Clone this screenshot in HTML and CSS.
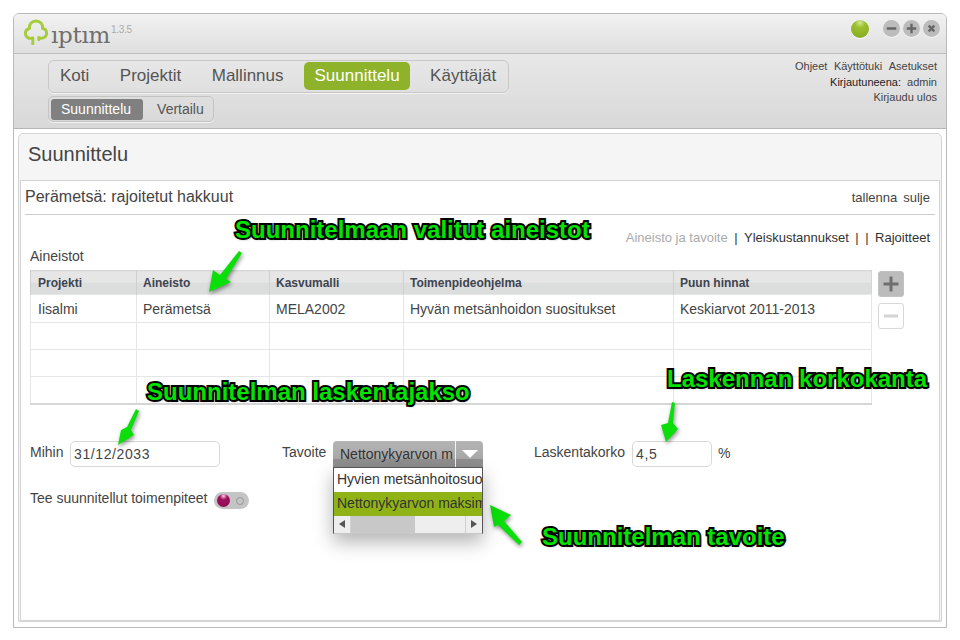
FILE: index.html
```html
<!DOCTYPE html>
<html lang="fi">
<head>
<meta charset="utf-8">
<title>Iptim</title>
<link rel="stylesheet" href="styles.css">
</head>
<body>
<div class="window">
  <header class="titlebar">
    <div class="logo">
      <svg class="clover" width="24" height="26" viewBox="0 0 26 28"><path d="M9.500 27v-6.500M16 22.500v-2.500c5 2 8.500-1 8.500-4.500 0-3-2-5-4.500-5.300 .8-4.500-2.500-8.200-7-8.200s-7.800 3.700-7 8.200C3.500 10.700 1.500 12.700 1.500 15.500c0 3.500 3.500 6.500 8 5" fill="none" stroke="#a6cc3c" stroke-width="3.200" stroke-linecap="round" stroke-linejoin="round"/></svg>
      <span class="wordmark">ıptım</span><span class="version">1.3.5</span>
    </div>
    <div class="winctl">
      <span class="led"></span>
      <span class="cbtn"><svg width="17" height="17" viewBox="0 0 18 18"><path d="M4 9h10" stroke="#666" stroke-width="2.500"/></svg></span>
      <span class="cbtn"><svg width="17" height="17" viewBox="0 0 18 18"><path d="M4 9h10M9 4v10" stroke="#666" stroke-width="2.500"/></svg></span>
      <span class="cbtn"><svg width="17" height="17" viewBox="0 0 18 18"><path d="M6 6l6 6M12 6l-6 6" stroke="#666" stroke-width="2.500"/></svg></span>
    </div>
  </header>
  <nav class="navbar">
    <div class="navcol">
      <div class="mainnav">
        <a class="tab">Koti</a><a class="tab">Projektit</a><a class="tab">Mallinnus</a><a class="tab active">Suunnittelu</a><a class="tab">Käyttäjät</a>
      </div>
      <div class="subnav">
        <a class="subtab active">Suunnittelu</a><a class="subtab">Vertailu</a>
      </div>
    </div>
    <div class="usermenu">
      <div class="umrow"><a>Ohjeet</a><a>Käyttötuki</a><a>Asetukset</a></div>
      <div class="umrow"><span class="dark">Kirjautuneena:</span><a>admin</a></div>
      <div class="umrow"><a>Kirjaudu ulos</a></div>
    </div>
  </nav>
  <main class="content">
    <section class="panel">
      <h1 class="paneltitle">Suunnittelu</h1>
      <div class="inner">
        <div class="planhead">
          <h2 class="planname">Perämetsä: rajoitetut hakkuut</h2>
          <div class="planactions"><a>tallenna</a><a>sulje</a></div>
        </div>
        <div class="steps"><span class="muted">Aineisto ja tavoite</span><span>|</span><a>Yleiskustannukset</a><span>|</span><span>|</span><a>Rajoitteet</a></div>
        <div class="seclabel">Aineistot</div>
        <div class="tablerow">
          <table class="grid">
            <thead>
              <tr><th class="c1">Projekti</th><th class="c2">Aineisto</th><th class="c3">Kasvumalli</th><th class="c4">Toimenpideohjelma</th><th class="c5">Puun hinnat</th></tr>
            </thead>
            <tbody>
              <tr class="firstrow"><td>Iisalmi</td><td>Perämetsä</td><td>MELA2002</td><td>Hyvän metsänhoidon suositukset</td><td>Keskiarvot 2011-2013</td></tr>
              <tr><td></td><td></td><td></td><td></td><td></td></tr>
              <tr><td></td><td></td><td></td><td></td><td></td></tr>
              <tr><td></td><td></td><td></td><td></td><td></td></tr>
            </tbody>
          </table>
          <div class="tablebtns">
            <span class="sqbtn on"><svg width="24" height="24" viewBox="0 0 24 24"><path d="M4.500 12h15M12 4.500v15" stroke="#6e6e6e" stroke-width="3"/></svg></span>
            <span class="sqbtn"><svg width="24" height="24" viewBox="0 0 24 24"><path d="M5 12h14" stroke="#d4d4d4" stroke-width="3"/></svg></span>
          </div>
        </div>
        <div class="formrow">
          <label class="lab lab-mihin">Mihin</label>
          <input class="field field-date" value="31/12/2033">
          <label class="lab lab-tavoite">Tavoite</label>
          <div class="select">
            <span class="selval">Nettonykyarvon m</span>
            <span class="selarrow"><svg width="16" height="8" viewBox="0 0 16 8"><path d="M0 0h16L8 8z" fill="#fff"/></svg></span>
            <div class="droplist">
              <div class="opt">Hyvien metsänhoitosuo</div>
              <div class="opt sel">Nettonykyarvon maksim</div>
              <div class="hscroll">
                <span class="sbtn"><svg width="6" height="8" viewBox="0 0 6 8"><path d="M6 0v8L0 4z" fill="#555"/></svg></span>
                <span class="strack"></span>
                <span class="sthumb"></span>
                <span class="sbtn"><svg width="6" height="8" viewBox="0 0 6 8"><path d="M0 0v8l6-4z" fill="#555"/></svg></span>
              </div>
            </div>
          </div>
          <label class="lab lab-korko">Laskentakorko</label>
          <input class="field field-rate" value="4,5">
          <span class="pct">%</span>
        </div>
        <div class="togglerow">
          <span>Tee suunnitellut toimenpiteet</span>
          <span class="toggle"><span class="knob"></span><span class="ring"></span></span>
        </div>
      </div>
    </section>
  </main>
</div>
<svg class="arrows" width="960" height="640" viewBox="0 0 960 640">
  <g class="arrowfill">
    <path d="M209 292L213 270L220 275L239 251L242 253L226 279L231 282Z"/>
    <path d="M118 445L121 430L127 427L136 409L139 411L131 430L134 435Z"/>
    <path d="M666 442L661 425L668 423L672 402L675 403L673 423L678 429Z"/>
    <path d="M490 505L511 515L504 521L522 542L519 545L498 525L494 527Z"/>
  </g>
</svg>
<div class="note note1">Suunnitelmaan valitut aineistot</div>
<div class="note note2">Suunnitelman laskentajakso</div>
<div class="note note3">Laskennan korkokanta</div>
<div class="note note4">Suunnitelman tavoite</div>
</body>
</html>
```

FILE: styles.css
```css
* { box-sizing: border-box; }
html, body { margin: 0; padding: 0; background: #fff; }
body {
  position: relative;
  width: 960px;
  height: 640px;
  overflow: hidden;
  padding: 13px 13px 0;
  font-family: "Liberation Sans", Arial, sans-serif;
  color: #333;
}
.window {
  width: 934px;
  height: 615px;
  border: 1px solid #bbb;
  border-radius: 6px 6px 0 0;
  display: flex;
  flex-direction: column;
  overflow: hidden;
}
.titlebar {
  height: 40px;
  flex: none;
  display: flex;
  justify-content: space-between;
  align-items: center;
  padding: 0 6px 0 10px;
  background: linear-gradient(#f2f2f2, #dedede);
  border-bottom: 1px solid #bdbdbd;
}
.logo { display: flex; align-items: flex-start; }
.clover { margin-top: 1px; }
.wordmark {
  font-family: "DejaVu Serif", serif;
  font-size: 23px;
  line-height: 30px;
  letter-spacing: -.3px;
  color: #6f6f6f;
  margin: 2px 0 0 3px;
}
.version { font-size: 10px; color: #aaa; line-height: 12px; margin: 6px 0 0 1px; letter-spacing: -.3px; }
.winctl { display: flex; align-items: center; gap: 3px; margin-bottom: 10px; }
.led {
  width: 18px;
  height: 18px;
  margin-right: 11px;
  border-radius: 50%;
  background: radial-gradient(circle at 50% 15%, #d5e89a 0, #9cc12e 28%, #84a820 100%);
  box-shadow: 0 1px 0 #fff;
}
.cbtn {
  width: 17px;
  height: 17px;
  border-radius: 50%;
  background: #bcbcbc;
  box-shadow: 0 1px 0 #f4f4f4;
  display: block;
}
.cbtn svg { display: block; }
.navbar {
  height: 75px;
  flex: none;
  display: flex;
  justify-content: space-between;
  padding: 6px 9px 0 34px;
  background: linear-gradient(#e8e8e8, #d8d8d8);
  border-bottom: 1px solid #b5b5b5;
}
.navcol { display: flex; flex-direction: column; gap: 3px; align-items: flex-start; }
.mainnav {
  width: 461px;
  height: 33px;
  border: 1px solid #c8c8c8;
  border-radius: 6px;
  display: flex;
  align-items: center;
  padding: 0 0 1px 3px;
  box-shadow: 0 1px 0 #f2f2f2;
}
.tab {
  font-size: 17px;
  color: #555;
  padding: 0 8px;
  margin-right: 14.500px;
  line-height: 28px;
  border-radius: 5px;
}
.tab.active { background: #8eb32a; color: #fff; margin-right: 12px; padding: 0 10.500px; margin-left: -2px; }
.subnav {
  width: 166px;
  height: 26px;
  border: 1px solid #c4c4c4;
  border-radius: 5px;
  display: flex;
  align-items: center;
  padding-left: 2px;
  box-shadow: 0 1px 0 #f2f2f2;
}
.subtab { font-size: 14px; line-height: 21px; padding: 0 10px; color: #555; }
.subtab.active { background: #808080; color: #fff; border-radius: 3px; padding: 0 12px 0 10px; margin-right: 4px; }
.usermenu { font-size: 11px; color: #444; display: flex; flex-direction: column; align-items: flex-end; line-height: 15.500px; margin-top: -1px; }
.umrow { display: flex; gap: 6px; }
.umrow:first-child { gap: 6.500px; }
.dark { color: #222; }
.content { flex: 1; background: #fff; padding: 4px 4px 5px; min-height: 0; }
.panel {
  height: 100%;
  border: 1px solid #d4d4d4;
  border-radius: 5px 5px 0 0;
  background: #f5f5f5;
  display: flex;
  flex-direction: column;
}
.paneltitle {
  margin: 0;
  height: 46px;
  flex: none;
  font-size: 20px;
  font-weight: 400;
  line-height: 41px;
  padding-left: 9px;
  color: #444;
}
.inner {
  flex: 1;
  margin: 0 1px;
  border: 1px solid #d4d4d4;
  background: #fff;
  padding: 0 4px;
}
.planhead {
  height: 34px;
  border-bottom: 1px solid #ccc;
  display: flex;
  justify-content: space-between;
  align-items: flex-start;
}
.planname { margin: 0; font-size: 16px; font-weight: 400; line-height: 32px; color: #444; }
.planactions { font-size: 13px; display: flex; gap: 6px; line-height: 34px; padding-right: 5px; color: #444; }
.steps {
  display: flex;
  justify-content: flex-end;
  gap: 6.500px;
  font-size: 13px;
  line-height: 16px;
  margin-top: 15px;
  padding-right: 5px;
}
.muted { color: #aaa; }
.seclabel { font-size: 14px; line-height: 16px; margin: 2px 0 6px 5px; color: #444; }
.tablerow { display: flex; margin-left: 5px; align-items: flex-start; }
.grid {
  width: 842px;
  table-layout: fixed;
  border-collapse: collapse;
  border: 1px solid #d6d6d6;
  border-bottom-width: 2px;
  font-size: 14px;
}
.c1 { width: 106px; }
.c2 { width: 133px; }
.c3 { width: 134px; }
.c4 { width: 270px; }
.grid th {
  height: 24px;
  padding: 0 6px;
  text-align: left;
  font-size: 12px;
  color: #3d4450;
  background: linear-gradient(#e6e6e6 50%, #dcdddd 50%);
  border-left: 1px solid #cfcfcf;
}
.grid td {
  height: 27px;
  padding: 0 6px;
  border: 1px solid #e6e6e6;
  color: #444;
}
.grid .firstrow td { height: 28px; }
.grid th:first-child, .grid td:first-child { padding-left: 7px; }
.tablebtns { display: flex; flex-direction: column; gap: 6px; margin: 1px 0 0 6px; }
.sqbtn {
  width: 26px;
  height: 26px;
  border: 1px solid #d8d8d8;
  border-radius: 3px;
  background: #fff;
  display: block;
}
.sqbtn svg { display: block; }
.sqbtn.on { background: #bcbcbc; border-color: #c2c2c2; }
.formrow {
  display: flex;
  align-items: flex-start;
  margin: 36px 0 0 5px;
  font-size: 14px;
}
.lab { line-height: 22px; color: #444; }
.lab-mihin { width: 40px; }
.lab-tavoite { width: 51px; margin-left: 62px; }
.lab-korko { width: 98px; margin-left: 51px; }
.field {
  height: 26px;
  border: 1px solid #d8d8d8;
  border-radius: 5px;
  font: 14px "Liberation Sans", Arial, sans-serif;
  letter-spacing: .6px;
  color: #444;
  padding: 0 3px;
  background: #fff;
  outline: 0;
}
.field-date { width: 150px; }
.field-rate { width: 80px; }
.pct { margin-left: 6px; line-height: 24px; color: #444; }
.select {
  position: relative;
  width: 150px;
  height: 26px;
  border-radius: 4px 4px 0 0;
  background: linear-gradient(#b4b4b4 0, #a8a8a8 70%, #8f8f8f 70%, #8f8f8f 100%);
  display: flex;
  align-items: center;
  padding-left: 7px;
  color: #333;
  font-size: 14px;
}
.selval { width: 115px; white-space: nowrap; overflow: hidden; }
.selarrow { width: 28px; height: 26px; border-left: 1px solid #f2f2f2; display: flex; align-items: center; justify-content: center; margin-left: 1px; }
.selarrow svg { display: block; }
.droplist {
  position: absolute;
  left: 0;
  top: 26px;
  width: 150px;
  height: 67px;
  border: 1px solid #555;
  border-bottom: 1px solid #c8c8c8;
  background: #fff;
  box-shadow: 0 8px 18px rgba(0,0,0,.3);
  z-index: 2;
}
.opt { height: 24px; line-height: 22px; padding-left: 3px; white-space: nowrap; overflow: hidden; font-size: 14px; color: #333; }
.opt.sel { background: #8fb314; height: 24px; line-height: 23px; }
.hscroll { display: flex; height: 17px; background: #eee; }
.sbtn { width: 17px; display: flex; align-items: center; justify-content: center; background: #eee; border-right: 1px solid #d0d0d0; }
.sbtn:last-child { border-right: 0; border-left: 1px solid #d0d0d0; }
.sbtn svg { display: block; }
.strack { width: 64px; background: #c8c8c8; }
.sthumb { flex: 1; background: #eee; }
.togglerow {
  display: flex;
  align-items: center;
  gap: 7px;
  margin: 21px 0 0 5px;
  font-size: 14px;
  color: #444;
  height: 20px;
}
.toggle {
  width: 35px;
  height: 17px;
  border-radius: 9px;
  background: #c4c4c4;
  display: flex;
  align-items: center;
  justify-content: space-between;
  padding: 0 5px 0 3px;
  margin-top: 6px;
}
.knob { width: 13px; height: 13px; border-radius: 50%; background: radial-gradient(circle at 50% 15%, #f6d3e6 0, #a0105e 30%, #8c0a50 100%); }
.ring { width: 8px; height: 8px; border-radius: 50%; border: 1px solid #999; }
.arrows { position: absolute; left: 0; top: 0; pointer-events: none; }
.arrowfill { fill: #0adf0a; filter: drop-shadow(1px 2px 2px rgba(0,0,0,.45)); }
.note {
  position: absolute;
  font-size: 24px;
  font-weight: 700;
  line-height: 28px;
  white-space: nowrap;
  color: #00e400;
  -webkit-text-stroke: 4px #000;
  paint-order: stroke fill;
  text-shadow: 1px 1px 3px rgba(0,0,0,.6);
}
.note1 { left: 235px; top: 216px; }
.note2 { left: 147px; top: 378px; }
.note3 { left: 667px; top: 365px; }
.note4 { left: 542px; top: 523px; }
```
